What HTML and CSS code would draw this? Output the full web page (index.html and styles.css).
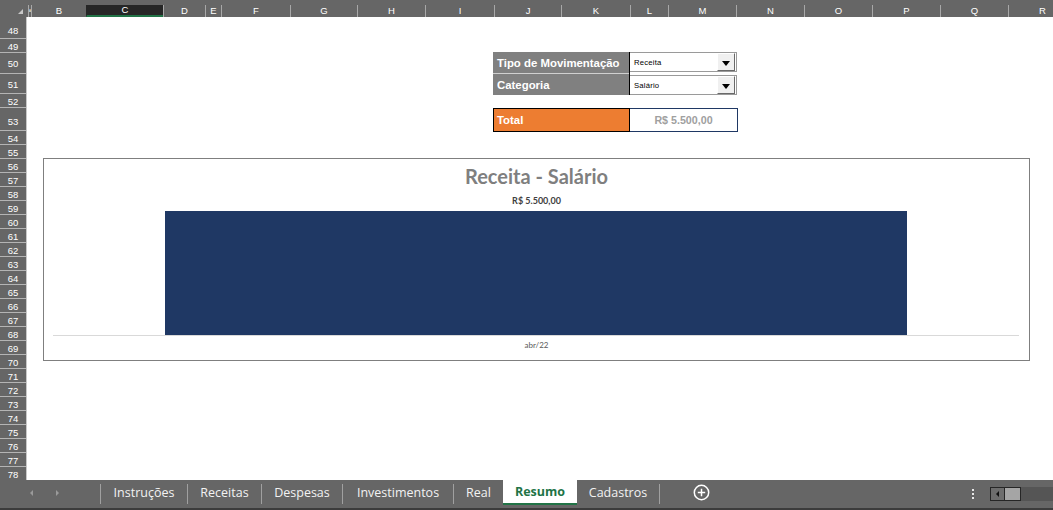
FILE: index.html
```html
<!DOCTYPE html>
<html lang="pt-BR">
<head>
<meta charset="utf-8">
<title>Resumo</title>
<link rel="stylesheet" href="styles.css">
</head>
<body>
<div class="app">
  <div class="colhead">
    <div class="corner"><span class="tri"></span></div>
    <div class="col w3 ca">A</div>
    <div class="col w55">B</div>
    <div class="col w77 sel">C</div>
    <div class="col w42">D</div>
    <div class="col w16">E</div>
    <div class="col w69">F</div>
    <div class="col w67">G</div>
    <div class="col w68">H</div>
    <div class="col w69">I</div>
    <div class="col w67">J</div>
    <div class="col w69">K</div>
    <div class="col w38">L</div>
    <div class="col w68">M</div>
    <div class="col w68">N</div>
    <div class="col w68">O</div>
    <div class="col w68">P</div>
    <div class="col w68">Q</div>
    <div class="col w68">R</div>
  </div>
  <div class="main">
    <div class="rowhead">
      <div class="rh h22">48</div>
      <div class="rh">49</div>
      <div class="rh h21">50</div>
      <div class="rh h20">51</div>
      <div class="rh">52</div>
      <div class="rh h23">53</div>
      <div class="rh">54</div>
      <div class="rh">55</div>
      <div class="rh">56</div>
      <div class="rh">57</div>
      <div class="rh">58</div>
      <div class="rh">59</div>
      <div class="rh">60</div>
      <div class="rh">61</div>
      <div class="rh">62</div>
      <div class="rh">63</div>
      <div class="rh">64</div>
      <div class="rh">65</div>
      <div class="rh">66</div>
      <div class="rh">67</div>
      <div class="rh">68</div>
      <div class="rh">69</div>
      <div class="rh">70</div>
      <div class="rh">71</div>
      <div class="rh">72</div>
      <div class="rh">73</div>
      <div class="rh">74</div>
      <div class="rh">75</div>
      <div class="rh">76</div>
      <div class="rh">77</div>
      <div class="rh">78</div>
    </div>
    <div class="sheet">
      <div class="form">
        <div class="fgroup">
          <div class="flabel first">Tipo de Movimentação</div>
          <div class="fcell">
            <div class="combo"><span class="ctext">Receita</span><span class="cbtn"><i class="arrow"></i></span></div>
          </div>
          <div class="flabel">Categoria</div>
          <div class="fcell second">
            <div class="combo"><span class="ctext">Salário</span><span class="cbtn"><i class="arrow"></i></span></div>
          </div>
        </div>
        <div class="total">
          <div class="tlabel">Total</div>
          <div class="tvalue">R$ 5.500,00</div>
        </div>
      </div>
      <div class="chart">
        <div class="ctitle">Receita - Salário</div>
        <div class="dlabel">R$ 5.500,00</div>
        <div class="plot"><div class="bar"></div></div>
        <div class="xlabel">abr/22</div>
      </div>
    </div>
  </div>
  <div class="tabbar">
    <div class="nav"><span class="nav-l"></span><span class="nav-r"></span></div>
    <span class="sep"></span>
    <div class="tab t1">Instruções</div>
    <span class="sep"></span>
    <div class="tab t2">Receitas</div>
    <span class="sep"></span>
    <div class="tab t3">Despesas</div>
    <span class="sep"></span>
    <div class="tab t4">Investimentos</div>
    <span class="sep"></span>
    <div class="tab t5">Real</div>
    <div class="tab active">Resumo</div>
    <div class="tab t7">Cadastros</div>
    <span class="sep"></span>
    <svg class="plus" width="17" height="17" viewBox="0 0 17 17">
      <circle cx="8.5" cy="8.5" r="7.2" fill="none" stroke="#ffffff" stroke-width="1.5"/>
      <path d="M8.5 4.8V12.2M4.8 8.5H12.2" stroke="#ffffff" stroke-width="1.5"/>
    </svg>
    <div class="tright">
      <div class="dots"><i></i><i></i><i></i></div>
      <div class="scroll">
        <div class="sbtn"><i class="sarrow"></i></div>
        <div class="thumb"></div>
        <div class="track"></div>
      </div>
    </div>
  </div>
</div>
</body>
</html>
```
FILE: styles.css
```css
body {
  margin: 0;
  background: #ffffff;
}

.app {
  width: 1053px;
  height: 510px;
  display: flex;
  flex-direction: column;
  overflow: hidden;
  font-family: "Liberation Sans", Arial, sans-serif;
}

/* column header */
.colhead {
  height: 17px;
  flex: none;
  box-sizing: border-box;
  padding-top: 5px;
  background: #666666;
  display: flex;
  color: #ffffff;
  font-size: 9.5px;
}

.corner {
  width: 28px;
  flex: none;
}

.tri {
  display: block;
  width: 0;
  height: 0;
  border-left: 5px solid transparent;
  border-bottom: 5px solid #c8c8c8;
  margin: 4px 0 0 18px;
}

.col {
  flex: none;
  height: 12px;
  box-sizing: border-box;
  border-left: 1px solid #a8a8a8;
  line-height: 12px;
  text-align: center;
  overflow: hidden;
  white-space: nowrap;
}

.col.ca {
  font-size: 3px;
}

.col.sel {
  background: #262626;
  border-left-color: #262626;
  border-bottom: 2px solid #217346;
  line-height: 10px;
}

.w3 { width: 3px; }
.w16 { width: 16px; }
.w38 { width: 38px; }
.w42 { width: 42px; }
.w55 { width: 55px; }
.w67 { width: 67px; }
.w68 { width: 68px; }
.w69 { width: 69px; }
.w77 { width: 77px; }

/* main */
.main {
  flex: 1;
  min-height: 0;
  display: flex;
  overflow: hidden;
}

.rowhead {
  width: 27px;
  flex: none;
  box-sizing: border-box;
  background: #666666;
  border-right: 1px solid #c8c8c8;
  display: flex;
  flex-direction: column;
  color: #ffffff;
  font-size: 9.5px;
}

.rh {
  flex: none;
  height: 14px;
  box-sizing: border-box;
  border-bottom: 1px solid #b4b4b4;
  padding-top: 2px;
  display: flex;
  align-items: center;
  justify-content: center;
  line-height: 10px;
}

.rh.h20 { height: 20px; }
.rh.h21 { height: 21px; }
.rh.h22 { height: 22px; padding-top: 6px; }
.rh.h23 { height: 23px; padding-top: 5px; }

.sheet {
  flex: 1;
  padding: 35px 0 0 16px;
}

/* form */
.form {
  margin-left: 450px;
  width: 245px;
}

.fgroup {
  display: grid;
  grid-template-columns: 136px 108px;
  grid-template-rows: 22px 21px;
}

.flabel {
  background: #808080;
  color: #ffffff;
  font-weight: bold;
  font-size: 11.4px;
  padding-left: 4px;
  display: flex;
  align-items: center;
  white-space: nowrap;
}

.flabel.first {
  box-sizing: border-box;
  border-bottom: 1px solid #d0d0d0;
}

.fcell {
  border-left: 1px solid #000000;
}

.combo {
  height: 20px;
  box-sizing: border-box;
  border: 1px solid #9a9a9a;
  border-left: none;
  background: #ffffff;
  display: flex;
  align-items: center;
}

.fcell.second .combo {
  margin-top: 1px;
}

.ctext {
  flex: 1;
  padding-left: 4px;
  font-size: 7.7px;
  color: #000000;
  letter-spacing: 0.2px;
}

.cbtn {
  width: 18px;
  height: 18px;
  margin-right: 1px;
  box-sizing: border-box;
  background: #f0f0f0;
  border: 1px solid;
  border-color: #ffffff #696969 #696969 #ffffff;
  display: flex;
  align-items: center;
  justify-content: center;
}

.arrow {
  width: 0;
  height: 0;
  border-left: 4px solid transparent;
  border-right: 4px solid transparent;
  border-top: 5px solid #000000;
  margin-top: 2px;
}

.total {
  display: flex;
  margin-top: 13px;
  height: 24px;
}

.tlabel {
  width: 137px;
  box-sizing: border-box;
  background: #ed7d31;
  border: 1px solid #000000;
  color: #ffffff;
  font-weight: bold;
  font-size: 11.4px;
  padding-left: 3px;
  display: flex;
  align-items: center;
}

.tvalue {
  width: 108px;
  box-sizing: border-box;
  border: 1px solid #1f3864;
  border-left: none;
  color: #a0a0a0;
  font-weight: bold;
  font-size: 10.7px;
  display: flex;
  align-items: center;
  justify-content: center;
}

/* chart */
.chart {
  margin-top: 26px;
  width: 987px;
  height: 203px;
  box-sizing: border-box;
  border: 1px solid #7f7f7f;
  display: flex;
  flex-direction: column;
  align-items: center;
  font-family: Lato, "Liberation Sans", sans-serif;
}

.ctitle {
  margin-top: 5px;
  font-size: 20px;
  line-height: 24px;
  font-weight: bold;
  color: #7f7f7f;
}

.dlabel {
  margin-top: 8px;
  font-size: 9px;
  line-height: 10px;
  font-weight: bold;
  color: #404040;
}

.plot {
  align-self: stretch;
  margin: 5px 10px 0 9px;
  height: 125px;
  box-sizing: border-box;
  border-bottom: 1px solid #d9d9d9;
  display: flex;
  justify-content: center;
  align-items: flex-end;
}

.bar {
  width: 742px;
  height: 124px;
  background: #1f3864;
}

.xlabel {
  margin-top: 4px;
  font-size: 8px;
  line-height: 10px;
  color: #595959;
}

/* tab bar */
.tabbar {
  height: 30px;
  flex: none;
  box-sizing: border-box;
  background: #666666;
  border-bottom: 2px solid #3c3c3c;
  display: flex;
  align-items: flex-start;
  font-family: "Open Sans", "Noto Sans", sans-serif;
  font-size: 12.5px;
  color: #f2f2f2;
}

.nav {
  width: 100px;
  height: 25px;
  flex: none;
  display: flex;
  align-items: center;
}

.nav-l {
  width: 0;
  height: 0;
  margin-left: 30px;
  border-top: 3px solid transparent;
  border-bottom: 3px solid transparent;
  border-right: 3px solid #9a9a9a;
}

.nav-r {
  width: 0;
  height: 0;
  margin-left: 23px;
  border-top: 3px solid transparent;
  border-bottom: 3px solid transparent;
  border-left: 3px solid #9a9a9a;
}

.sep {
  flex: none;
  width: 1px;
  height: 20px;
  margin-top: 4px;
  background: #a0a0a0;
}

.tab {
  flex: none;
  height: 25px;
  box-sizing: border-box;
  display: flex;
  align-items: center;
  justify-content: center;
  white-space: nowrap;
}

.t1 { width: 86px; }
.t2 { width: 73px; }
.t3 { width: 80px; }
.t4 { width: 110px; }
.t5 { width: 49px; }
.t7 { width: 82px; }

.tab.active {
  width: 74px;
  background: #ffffff;
  border-bottom: 2px solid #217346;
  color: #217346;
  font-weight: bold;
}

.plus {
  flex: none;
  margin: 4px 0 0 33px;
}

.tright {
  margin-left: auto;
  display: flex;
  flex: none;
}

.dots {
  margin-top: 9px;
  display: flex;
  flex-direction: column;
  gap: 2px;
}

.dots i {
  display: block;
  width: 2px;
  height: 2px;
  background: #e8e8e8;
}

.scroll {
  display: flex;
  margin: 7px 0 0 16px;
  height: 14px;
}

.sbtn {
  width: 15px;
  height: 14px;
  box-sizing: border-box;
  background: #6d6d6d;
  border: 1px solid #262626;
  display: flex;
  align-items: center;
  justify-content: center;
}

.sarrow {
  width: 0;
  height: 0;
  border-top: 3px solid transparent;
  border-bottom: 3px solid transparent;
  border-right: 3px solid #111111;
}

.thumb {
  width: 16px;
  height: 14px;
  box-sizing: border-box;
  background: #a5a5a5;
  border: 1px solid #262626;
  border-left: none;
}

.track {
  width: 32px;
  height: 14px;
  background: #555555;
}
```
